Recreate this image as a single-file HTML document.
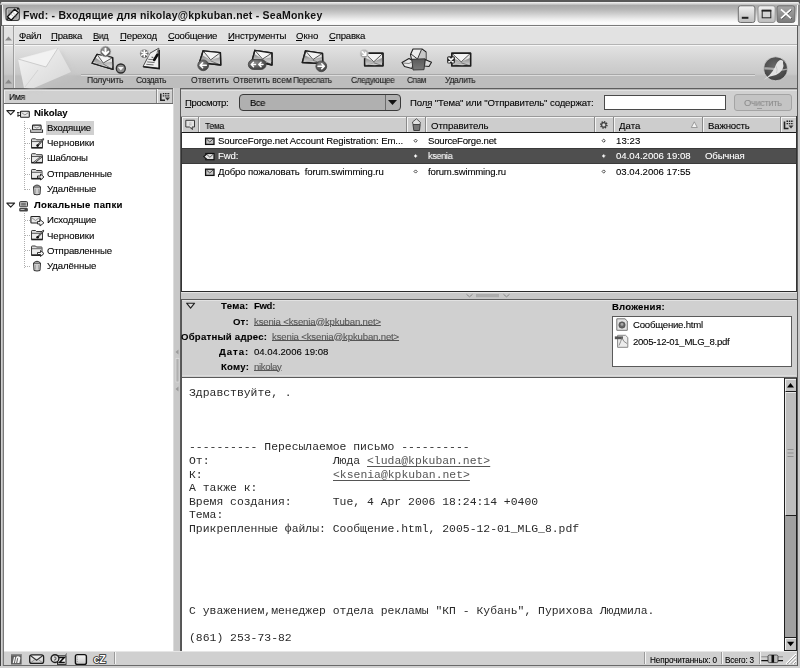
<!DOCTYPE html>
<html><head><meta charset="utf-8"><style>
*{margin:0;padding:0;box-sizing:border-box}
html,body{width:800px;height:668px;overflow:hidden}
body{position:relative;background:#d4d4d4;font-family:"Liberation Sans",sans-serif}
.a{position:absolute}
.t{position:absolute;white-space:pre;will-change:transform}
svg{position:absolute;overflow:visible}

</style></head><body>
<div class="a" style="left:0px;top:0px;width:800px;height:8px;background:#585858"></div>
<div class="a" style="left:0px;top:0px;width:800px;height:26px;background:linear-gradient(#585858 0,#585858 1.5px,#f4f4f4 2px,#e4e4e4 3px,#aaaaaa 5.5px,#b4b4b4 9px,#cfcfcf 14px,#ececec 19px,#fdfdfd 23px,#f4f4f4 25px,#7a7a7a 25px,#7a7a7a 26px);border-radius:6px 6px 0 0"></div>
<div class="a" style="left:0px;top:5px;width:2px;height:21px;background:#585858"></div>
<div class="a" style="left:2px;top:5px;width:1px;height:20px;background:#f4f4f4"></div>
<div class="a" style="left:797px;top:5px;width:1px;height:20px;background:#f8f8f8"></div>
<div class="a" style="left:798px;top:5px;width:2px;height:21px;background:#8a8a8a"></div>
<div class="a" style="left:0px;top:26px;width:800px;height:18px;background:#e2e2e2;border-top:1px solid #f6f6f6"></div>
<div class="a" style="left:0px;top:44px;width:800px;height:1px;background:#b4b4b4"></div>
<div class="a" style="left:0px;top:45px;width:800px;height:1px;background:#f6f6f6"></div>
<div class="a" style="left:0px;top:46px;width:800px;height:42px;background:linear-gradient(#e2e2e2 0,#d2d2d2 16px,#c8c8c8 28px,#c8c8c8 28px,#bdbdbd 30px,#bdbdbd 42px)"></div>
<div class="a" style="left:0px;top:88px;width:800px;height:1px;background:#5e5e5e"></div>
<div class="a" style="left:13px;top:26px;width:1px;height:62px;background:#9e9e9e"></div>
<div class="a" style="left:14px;top:26px;width:1px;height:62px;background:#e8e8e8"></div>
<svg style="left:5px;top:36px" width="8" height="5"><path d="M0,4.5 L3.5,0.5 L7,4.5Z" fill="#8a8a8a"/></svg>
<svg style="left:5px;top:79px" width="8" height="5"><path d="M0,4.5 L3.5,0.5 L7,4.5Z" fill="#8a8a8a"/></svg>
<div class="a" style="left:81px;top:74px;width:674px;height:1px;background:#a8a8a8"></div>
<div class="a" style="left:81px;top:75px;width:674px;height:1px;background:#dcdcdc"></div>
<div class="a" style="left:3px;top:88px;width:171px;height:564px;background:#fff;border-left:1px solid #6a6a6a"></div>
<div class="a" style="left:4px;top:88px;width:169px;height:16px;background:#d0d0d0;border-top:1px solid #5e5e5e;border-bottom:1px solid #6a6a6a"></div>
<div class="a" style="left:4px;top:89px;width:169px;height:1px;background:#b4b4b4"></div>
<div class="a" style="left:4px;top:90px;width:169px;height:1px;background:#e2e2e2"></div>
<div class="a" style="left:4px;top:90px;width:1px;height:13px;background:#eeeeee"></div>
<div class="a" style="left:156px;top:89px;width:1px;height:14px;background:#8a8a8a"></div>
<div class="a" style="left:157px;top:89px;width:1px;height:14px;background:#f4f4f4"></div>
<div class="a" style="left:172px;top:89px;width:1px;height:14px;background:#8a8a8a"></div>
<div class="a" style="left:173px;top:88px;width:7px;height:563px;background:#c8c8c8;border-left:1px solid #dcdcdc"></div>
<div class="a" style="left:180px;top:89px;width:1px;height:562px;background:#5a5a5a"></div>
<div class="a" style="left:181px;top:89px;width:616px;height:27px;background:#d0d0d0;border-top:1px solid #b4b4b4"></div>
<div class="a" style="left:181px;top:90px;width:616px;height:1px;background:#e2e2e2"></div>
<div class="a" style="left:239px;top:94px;width:162px;height:17px;background:#b0b0b0;border:1px solid #3a3a3a;border-radius:4px"></div>
<div class="a" style="left:385px;top:95px;width:1px;height:15px;background:#6a6a6a"></div>
<div class="a" style="left:604px;top:95px;width:122px;height:15px;background:#fff;border:1px solid #4a4a4a"></div>
<div class="a" style="left:734px;top:94px;width:58px;height:17px;background:#c4c4c4;border:1px solid #a4a4a4;border-radius:3px"></div>
<div class="a" style="left:181px;top:116px;width:616px;height:17px;background:#cdcdcd;border-bottom:1px solid #1a1a1a;border-left:1px solid #555"></div>
<div class="a" style="left:181px;top:116px;width:616px;height:1px;background:#9a9a9a"></div>
<div class="a" style="left:182px;top:117px;width:614px;height:1px;background:#f4f4f4"></div>
<div class="a" style="left:198px;top:117px;width:1px;height:15px;background:#8a8a8a"></div>
<div class="a" style="left:199px;top:117px;width:1px;height:15px;background:#f4f4f4"></div>
<div class="a" style="left:406px;top:117px;width:1px;height:15px;background:#8a8a8a"></div>
<div class="a" style="left:407px;top:117px;width:1px;height:15px;background:#f4f4f4"></div>
<div class="a" style="left:425px;top:117px;width:1px;height:15px;background:#8a8a8a"></div>
<div class="a" style="left:426px;top:117px;width:1px;height:15px;background:#f4f4f4"></div>
<div class="a" style="left:594px;top:117px;width:1px;height:15px;background:#8a8a8a"></div>
<div class="a" style="left:595px;top:117px;width:1px;height:15px;background:#f4f4f4"></div>
<div class="a" style="left:613px;top:117px;width:1px;height:15px;background:#8a8a8a"></div>
<div class="a" style="left:614px;top:117px;width:1px;height:15px;background:#f4f4f4"></div>
<div class="a" style="left:702px;top:117px;width:1px;height:15px;background:#8a8a8a"></div>
<div class="a" style="left:703px;top:117px;width:1px;height:15px;background:#f4f4f4"></div>
<div class="a" style="left:780px;top:117px;width:1px;height:15px;background:#8a8a8a"></div>
<div class="a" style="left:781px;top:117px;width:1px;height:15px;background:#f4f4f4"></div>
<div class="a" style="left:182px;top:117px;width:1px;height:15px;background:#f4f4f4"></div>
<div class="a" style="left:796px;top:116px;width:1px;height:17px;background:#333"></div>
<div class="a" style="left:181px;top:133px;width:616px;height:159px;background:#fff;border-left:1px solid #333;border-bottom:1px solid #2a2a2a;border-right:1px solid #333"></div>
<div class="a" style="left:182px;top:148px;width:614px;height:16px;background:#4f4f4f;border-top:1px solid #3a3a3a;border-bottom:1px solid #3a3a3a"></div>
<div class="a" style="left:181px;top:292px;width:616px;height:7px;background:#c8c8c8;border-top:1px solid #e4e4e4"></div>
<div class="a" style="left:181px;top:299px;width:616px;height:79px;background:#d0d0d0;border-top:1px solid #5e5e5e;border-bottom:1px solid #5a5a5a;border-left:1px solid #555"></div>
<div class="a" style="left:182px;top:300px;width:614px;height:1px;background:#e2e2e2"></div>
<div class="a" style="left:182px;top:375px;width:614px;height:1px;background:#dcdcdc"></div>
<div class="a" style="left:612px;top:316px;width:180px;height:51px;background:#fff;border:1px solid #5a5a5a"></div>
<div class="a" style="left:181px;top:378px;width:604px;height:273px;background:#fff;border-left:1px solid #555"></div>
<div class="a" style="left:784px;top:378px;width:13px;height:273px;background:#a0a0a0;border-left:1px solid #1e1e1e;border-right:1px solid #1e1e1e;border-bottom:1px solid #1e1e1e"></div>
<div class="a" style="left:785px;top:378px;width:11px;height:1px;background:#555"></div>
<div class="a" style="left:785px;top:379px;width:11px;height:13px;background:#c4c4c4;border-top:1px solid #f0f0f0;border-left:1px solid #f0f0f0;border-bottom:1px solid #1e1e1e"></div>
<div class="a" style="left:785px;top:392px;width:11px;height:124px;background:#bdbdbd;border-top:1px solid #e8e8e8;border-left:1px solid #e8e8e8;border-bottom:1px solid #1e1e1e"></div>
<div class="a" style="left:785px;top:637px;width:11px;height:14px;background:#c4c4c4;border-top:1px solid #1e1e1e;border-bottom:1px solid #1e1e1e"></div>
<div class="a" style="left:785px;top:638px;width:11px;height:1px;background:#f0f0f0"></div>
<div class="a" style="left:785px;top:638px;width:1px;height:12px;background:#f0f0f0"></div>
<div class="a" style="left:4px;top:651px;width:793px;height:14px;background:#d0d0d0;border-top:1px solid #e6e6e6"></div>
<div class="a" style="left:114px;top:652px;width:1px;height:12px;background:#9a9a9a"></div>
<div class="a" style="left:115px;top:652px;width:1px;height:12px;background:#f4f4f4"></div>
<div class="a" style="left:644px;top:652px;width:1px;height:12px;background:#9a9a9a"></div>
<div class="a" style="left:645px;top:652px;width:1px;height:12px;background:#f4f4f4"></div>
<div class="a" style="left:721px;top:652px;width:1px;height:12px;background:#9a9a9a"></div>
<div class="a" style="left:722px;top:652px;width:1px;height:12px;background:#f4f4f4"></div>
<div class="a" style="left:759px;top:652px;width:1px;height:12px;background:#9a9a9a"></div>
<div class="a" style="left:760px;top:652px;width:1px;height:12px;background:#f4f4f4"></div>
<div class="a" style="left:0px;top:26px;width:1px;height:642px;background:#404040"></div>
<div class="a" style="left:1px;top:26px;width:1px;height:642px;background:#d0d0d0"></div>
<div class="a" style="left:2px;top:26px;width:1px;height:642px;background:#b8b8b8"></div>
<div class="a" style="left:3px;top:26px;width:1px;height:640px;background:#7a7a7a"></div>
<div class="a" style="left:797px;top:26px;width:1px;height:642px;background:#5a5a5a"></div>
<div class="a" style="left:798px;top:26px;width:2px;height:642px;background:#c8c8c8"></div>
<div class="a" style="left:3px;top:665px;width:794px;height:1px;background:#6a6a6a"></div>
<div class="a" style="left:0px;top:666px;width:800px;height:2px;background:#d0d0d0"></div>
<svg style="left:0;top:0" width="800" height="668"><defs>
<linearGradient id="capb" x1="0" y1="0" x2="0" y2="1"><stop offset="0" stop-color="#f2f2f2"/><stop offset="1" stop-color="#bcbcbc"/></linearGradient>
<linearGradient id="capx" x1="0" y1="0" x2="0" y2="1"><stop offset="0" stop-color="#a8a8a8"/><stop offset="1" stop-color="#7a7a7a"/></linearGradient>
</defs><rect x="738.3" y="5.8" width="16.6" height="16.7" rx="2.2" fill="url(#capb)" stroke="#6e6e6e" stroke-width="1"/><rect x="741.8" y="16.8" width="6.6" height="2" fill="#222"/><rect x="758" y="5.8" width="17.2" height="16.7" rx="2.2" fill="url(#capb)" stroke="#8a8a8a" stroke-width="0.9"/><rect x="762.2" y="10.3" width="8.6" height="7.5" fill="#d4d4d4" stroke="#222" stroke-width="1"/><rect x="761.7" y="9.8" width="9.6" height="1.8" fill="#222"/><rect x="777" y="5.8" width="17.8" height="16.7" rx="2.2" fill="url(#capx)" stroke="#6a6a6a" stroke-width="0.9"/><path d="M781.5,10 L791.5,19 M791.5,10 L781.5,19" stroke="#3a3a3a" stroke-width="1.6"/><path d="M781,9.3 L791,18.3 M791,9.3 L781,18.3" stroke="#fff" stroke-width="1.8"/><rect x="6" y="7.8" width="13.3" height="12.6" rx="2.2" fill="#9a9a9a" stroke="#3a3a3a" stroke-width="1.1"/><rect x="7.3" y="9" width="10.8" height="10.2" rx="1.2" fill="none" stroke="#d8d8d8" stroke-width="0.7"/><polygon points="7.4,16.8 14.6,9.2 18.3,12.6 11.2,20.2" fill="#fafafa" stroke="#111" stroke-width="1.3" stroke-linejoin="round"/><path d="M10.5,13.8 L14.5,17.3 M12.3,12 L15.8,15.2" stroke="#aaa" stroke-width="0.7"/><path d="M7,19.5 L9,18 M17,9 L18.8,8.5" stroke="#111" stroke-width="1.4"/><defs>
<linearGradient id="envg" x1="0" y1="0" x2="0" y2="1"><stop offset="0" stop-color="#f6f6f6"/><stop offset="0.5" stop-color="#e0e0e0"/><stop offset="1" stop-color="#c4c4c4"/></linearGradient>
<radialGradient id="dcirc" cx="0.4" cy="0.35" r="0.7"><stop offset="0" stop-color="#8a8a8a"/><stop offset="1" stop-color="#3a3a3a"/></radialGradient>
<radialGradient id="mcirc" cx="0.4" cy="0.3" r="0.75"><stop offset="0" stop-color="#9a9a9a"/><stop offset="1" stop-color="#4e4e4e"/></radialGradient>
<radialGradient id="lcirc" cx="0.4" cy="0.35" r="0.7"><stop offset="0" stop-color="#d8d8d8"/><stop offset="1" stop-color="#8a8a8a"/></radialGradient>
<linearGradient id="envband" x1="0" y1="0" x2="0" y2="1"><stop offset="0" stop-color="#8a8a8a"/><stop offset="1" stop-color="#d8d8d8"/></linearGradient>
<linearGradient id="bucket" x1="0" y1="0" x2="0" y2="1"><stop offset="0" stop-color="#5a5a5a"/><stop offset="1" stop-color="#7a7a7a"/></linearGradient>
<filter id="blur2" x="-20%" y="-20%" width="140%" height="140%"><feGaussianBlur stdDeviation="2"/></filter>
<linearGradient id="bigenv" x1="0" y1="0" x2="1" y2="1"><stop offset="0" stop-color="#f4f4f4"/><stop offset="1" stop-color="#d6d6d6"/></linearGradient>
<radialGradient id="logo" cx="0.45" cy="0.4" r="0.65"><stop offset="0" stop-color="#6a6a6a"/><stop offset="1" stop-color="#3e3e3e"/></radialGradient>
</defs><polygon points="22.00,62.00 62.00,51.00 75.00,76.00 38.00,90.00 28.00,90.00" fill="#c4c4c4" opacity="0.5" filter="url(#blur2)"/><polygon points="18.00,59.00 58.00,48.00 71.00,72.00 34.00,88.00 24.00,88.00" fill="url(#bigenv)"/><polygon points="19.00,59.50 58.00,48.50 46.00,67.00" fill="#f2f2f2"/><polyline points="18.00,59.00 46.00,67.00 58.00,48.00" fill="none" stroke="#c8c8c8" stroke-width="0.9"/><polyline points="25.00,87.00 38.00,70.00" fill="none" stroke="#cfcfcf" stroke-width="0.8"/><polygon points="97.00,54.30 112.70,57.50 113.00,69.50 92.00,63.30" fill="url(#envg)" stroke="#1e1e1e" stroke-width="1.15" stroke-linejoin="round"/><polygon points="95.25,57.45 103.25,63.04 112.81,61.70 112.92,66.50 103.55,66.71 93.00,61.50" fill="url(#envband)"/><polygon points="97.94,54.49 103.25,63.04 111.76,57.31" fill="#f4f4f4"/><polyline points="97.00,54.30 103.25,63.04 112.70,57.50" fill="none" stroke="#4a4a4a" stroke-width="0.9" stroke-linejoin="round"/><polyline points="113.00,69.50 103.06,63.88" fill="none" stroke="#666" stroke-width="0.8"/><polyline points="92.00,63.30 103.06,63.88" fill="none" stroke="#9a9a9a" stroke-width="0.6"/><polygon points="97.00,54.30 112.70,57.50 113.00,69.50 92.00,63.30" fill="none" stroke="#1e1e1e" stroke-width="1.15" stroke-linejoin="round"/><circle cx="105.5" cy="51.5" r="5.4" fill="url(#mcirc)" stroke="#c4c4c4" stroke-width="0.7"/><path d="M105.5,48.6 V54 M102.6,51.6 L105.5,54.5 L108.4,51.6" fill="none" stroke="#fff" stroke-width="1.9" stroke-linecap="round" stroke-linejoin="round"/><circle cx="120.8" cy="68.5" r="4.5" fill="#8e8e8e" stroke="#2a2a2a" stroke-width="1.3"/><path d="M117.9,67 L123.7,67 L120.8,70.6Z" fill="#f4f4f4"/><polygon points="150.00,53.20 158.80,48.20 159.20,68.60 143.00,66.60" fill="#efefef" stroke="#3a3a3a" stroke-width="0.9" stroke-linejoin="round"/><path d="M143.3,66.8 L159.2,68.6 L159.2,50" fill="none" stroke="#1a1a1a" stroke-width="1.5"/><path d="M148.3,59.3 L155,59.8 M147.2,61.9 L154.5,62.5 M146.3,64.3 L153.5,64.9" stroke="#6a6a6a" stroke-width="1"/><path d="M151.5,57.2 L153.3,57.4" stroke="#444" stroke-width="1"/><path d="M154.2,60 L157.5,54.5" stroke="#0e0e0e" stroke-width="2.6" stroke-linecap="round"/><path d="M158.3,48.8 L157,53" stroke="#777" stroke-width="1"/><circle cx="144.3" cy="53.6" r="4.7" fill="url(#mcirc)" stroke="#e8e8e8" stroke-width="0.8"/><path d="M144.3,50.4 V56.8 M141.5,52 L147.1,55.2 M141.5,55.2 L147.1,52" stroke="#fff" stroke-width="1.4" stroke-linecap="round"/><polygon points="203.10,50.80 220.40,52.60 220.80,65.00 199.50,62.50" fill="url(#envg)" stroke="#1e1e1e" stroke-width="1.35" stroke-linejoin="round"/><polygon points="201.84,54.89 210.66,59.89 220.54,56.94 220.70,61.90 211.22,63.88 200.22,60.16" fill="url(#envband)"/><polygon points="204.14,50.91 210.66,59.89 219.36,52.49" fill="#f4f4f4"/><polyline points="203.10,50.80 210.66,59.89 220.40,52.60" fill="none" stroke="#4a4a4a" stroke-width="0.9" stroke-linejoin="round"/><polyline points="220.80,65.00 210.53,60.86" fill="none" stroke="#666" stroke-width="0.8"/><polyline points="199.50,62.50 210.53,60.86" fill="none" stroke="#9a9a9a" stroke-width="0.6"/><polygon points="203.10,50.80 220.40,52.60 220.80,65.00 199.50,62.50" fill="none" stroke="#1e1e1e" stroke-width="1.35" stroke-linejoin="round"/><circle cx="203.2" cy="65.3" r="5.4" fill="url(#dcirc)" stroke="#444" stroke-width="0.8"/><path d="M206.3,65.3 H200.3 M202.6,62.8 L200.1,65.3 L202.6,67.8" fill="none" stroke="#fff" stroke-width="1.6" stroke-linecap="round" stroke-linejoin="round"/><polygon points="254.80,50.30 272.00,53.00 272.00,65.00 252.30,60.00" fill="url(#envg)" stroke="#1e1e1e" stroke-width="1.35" stroke-linejoin="round"/><polygon points="253.93,53.70 262.55,59.03 272.00,57.20 272.00,62.00 263.13,62.75 252.80,58.06" fill="url(#envband)"/><polygon points="255.83,50.46 262.55,59.03 270.97,52.84" fill="#f4f4f4"/><polyline points="254.80,50.30 262.55,59.03 272.00,53.00" fill="none" stroke="#4a4a4a" stroke-width="0.9" stroke-linejoin="round"/><polyline points="272.00,65.00 262.45,59.90" fill="none" stroke="#666" stroke-width="0.8"/><polyline points="252.30,60.00 262.45,59.90" fill="none" stroke="#9a9a9a" stroke-width="0.6"/><polygon points="254.80,50.30 272.00,53.00 272.00,65.00 252.30,60.00" fill="none" stroke="#1e1e1e" stroke-width="1.35" stroke-linejoin="round"/><rect x="248.3" y="59.5" width="17.8" height="10" rx="5" fill="url(#dcirc)" stroke="#444" stroke-width="0.8"/><path d="M255.5,64.5 H251.5 M253.5,62.3 L251.3,64.5 L253.5,66.7 M263,64.5 H259 M261,62.3 L258.8,64.5 L261,66.7" fill="none" stroke="#fff" stroke-width="1.5" stroke-linecap="round" stroke-linejoin="round"/><polygon points="305.50,50.80 322.50,53.30 322.80,63.50 302.30,62.50" fill="url(#envg)" stroke="#1e1e1e" stroke-width="1.35" stroke-linejoin="round"/><polygon points="304.38,54.89 313.01,59.50 322.61,56.87 322.73,60.95 313.57,63.05 302.94,60.16" fill="url(#envband)"/><polygon points="306.52,50.95 313.01,59.50 321.48,53.15" fill="#f4f4f4"/><polyline points="305.50,50.80 313.01,59.50 322.50,53.30" fill="none" stroke="#4a4a4a" stroke-width="0.9" stroke-linejoin="round"/><polyline points="322.80,63.50 312.90,60.37" fill="none" stroke="#666" stroke-width="0.8"/><polyline points="302.30,62.50 312.90,60.37" fill="none" stroke="#9a9a9a" stroke-width="0.6"/><polygon points="305.50,50.80 322.50,53.30 322.80,63.50 302.30,62.50" fill="none" stroke="#1e1e1e" stroke-width="1.35" stroke-linejoin="round"/><circle cx="321.3" cy="66.3" r="5.4" fill="url(#dcirc)" stroke="#444" stroke-width="0.8"/><path d="M318,66.3 H324.2 M321.8,63.8 L324.3,66.3 L321.8,68.8" fill="none" stroke="#fff" stroke-width="1.6" stroke-linecap="round" stroke-linejoin="round"/><polygon points="364.60,53.20 383.00,53.20 383.00,65.80 364.60,65.80" fill="url(#envg)" stroke="#1e1e1e" stroke-width="1.35" stroke-linejoin="round"/><polygon points="364.60,57.61 373.80,61.77 383.00,57.61 383.00,62.65 374.72,65.80 364.60,63.28" fill="url(#envband)"/><polygon points="365.70,53.20 373.80,61.77 381.90,53.20" fill="#f4f4f4"/><polyline points="364.60,53.20 373.80,61.77 383.00,53.20" fill="none" stroke="#4a4a4a" stroke-width="0.9" stroke-linejoin="round"/><polyline points="383.00,65.80 373.80,62.78" fill="none" stroke="#666" stroke-width="0.8"/><polyline points="364.60,65.80 373.80,62.78" fill="none" stroke="#9a9a9a" stroke-width="0.6"/><polygon points="364.60,53.20 383.00,53.20 383.00,65.80 364.60,65.80" fill="none" stroke="#1e1e1e" stroke-width="1.35" stroke-linejoin="round"/><circle cx="364.1" cy="53.7" r="4.1" fill="url(#lcirc)" stroke="#d0d0d0" stroke-width="0.7"/><path d="M362.2,51.8 L365.5,55.1 M365.8,52.3 V55.4 H362.8" fill="none" stroke="#fff" stroke-width="1.4" stroke-linecap="round"/><polygon points="402.00,62.50 409.00,58.50 413.50,61.00 412.00,68.50 404.50,66.50" fill="#e8e8e8" stroke="#222" stroke-width="1.1" stroke-linejoin="round"/><polyline points="403.00,63.00 409.00,63.50 412.50,61.50" fill="none" stroke="#555" stroke-width="0.7"/><polygon points="425.00,59.50 431.50,62.30 429.00,66.50 424.50,66.00" fill="#dadada" stroke="#222" stroke-width="1.1" stroke-linejoin="round"/><polygon points="410.50,54.50 413.00,49.00 422.00,49.00 426.00,52.00 426.00,59.50 411.50,59.50" fill="#ececec" stroke="#1e1e1e" stroke-width="1.1" stroke-linejoin="round"/><polygon points="417.50,59.00 421.50,49.50 425.50,52.50 425.50,59.00" fill="#c8c8c8"/><polyline points="411.00,54.00 417.50,59.00 421.50,49.50" fill="none" stroke="#222" stroke-width="0.9"/><polygon points="411.80,59.20 425.10,58.80 424.00,69.70 413.00,70.00" fill="url(#bucket)" stroke="#333" stroke-width="0.9"/><polygon points="451.80,53.20 470.60,53.20 470.60,65.90 451.80,65.90" fill="url(#envg)" stroke="#1e1e1e" stroke-width="1.35" stroke-linejoin="round"/><polygon points="451.80,57.65 461.20,61.84 470.60,57.65 470.60,62.73 462.14,65.90 451.80,63.36" fill="url(#envband)"/><polygon points="452.93,53.20 461.20,61.84 469.47,53.20" fill="#f4f4f4"/><polyline points="451.80,53.20 461.20,61.84 470.60,53.20" fill="none" stroke="#4a4a4a" stroke-width="0.9" stroke-linejoin="round"/><polyline points="470.60,65.90 461.20,62.85" fill="none" stroke="#666" stroke-width="0.8"/><polyline points="451.80,65.90 461.20,62.85" fill="none" stroke="#9a9a9a" stroke-width="0.6"/><polygon points="451.80,53.20 470.60,53.20 470.60,65.90 451.80,65.90" fill="none" stroke="#1e1e1e" stroke-width="1.35" stroke-linejoin="round"/><rect x="447.1" y="56.2" width="7.8" height="7.4" rx="1.6" fill="#2a2a2a"/><path d="M449,58.1 L453,61.9 M453,58.1 L449,61.9" stroke="#fff" stroke-width="1.7" stroke-linecap="round"/><circle cx="775.6" cy="68.8" r="12" fill="url(#logo)" stroke="#e0e0e0" stroke-width="0.7"/><path d="M764.2,67.3 Q772,66.8 779,69 Q784,69.5 787.3,68.3 L787.4,69.8 Q783,71 778,70.8 Q771,69.5 764.2,69.5Z" fill="#a8a8a8"/><path d="M763.5,80 L769.5,75 Q773,71.5 775,67 Q777,61.5 779.5,60.2 Q782,59.6 783.2,61.3 Q782.6,63 783.5,66 Q782.5,72 776,75 L770,76.6 Z" fill="#e2e2e2"/><path d="M776,66 Q778,70 776.5,73" fill="none" stroke="#c4c4c4" stroke-width="0.8"/><line x1="24.5" y1="121" x2="24.5" y2="190" stroke="#b0b0b0" stroke-width="1" stroke-dasharray="1,1"/><line x1="25" y1="128.5" x2="31" y2="128.5" stroke="#b0b0b0" stroke-width="1" stroke-dasharray="1,1"/><line x1="25" y1="143.5" x2="31" y2="143.5" stroke="#b0b0b0" stroke-width="1" stroke-dasharray="1,1"/><line x1="25" y1="158.5" x2="31" y2="158.5" stroke="#b0b0b0" stroke-width="1" stroke-dasharray="1,1"/><line x1="25" y1="174.5" x2="31" y2="174.5" stroke="#b0b0b0" stroke-width="1" stroke-dasharray="1,1"/><line x1="25" y1="189.5" x2="31" y2="189.5" stroke="#b0b0b0" stroke-width="1" stroke-dasharray="1,1"/><line x1="24.5" y1="213" x2="24.5" y2="268" stroke="#b0b0b0" stroke-width="1" stroke-dasharray="1,1"/><line x1="25" y1="220.5" x2="31" y2="220.5" stroke="#b0b0b0" stroke-width="1" stroke-dasharray="1,1"/><line x1="25" y1="235.5" x2="31" y2="235.5" stroke="#b0b0b0" stroke-width="1" stroke-dasharray="1,1"/><line x1="25" y1="250.5" x2="31" y2="250.5" stroke="#b0b0b0" stroke-width="1" stroke-dasharray="1,1"/><line x1="25" y1="266.5" x2="31" y2="266.5" stroke="#b0b0b0" stroke-width="1" stroke-dasharray="1,1"/><polygon points="6.8,110.6 14.600000000000001,110.6 10.7,114.6" fill="#f4f4f4" stroke="#222" stroke-width="1.1" stroke-linejoin="round"/><polygon points="6.8,203.1 14.600000000000001,203.1 10.7,207.1" fill="#f4f4f4" stroke="#222" stroke-width="1.1" stroke-linejoin="round"/><rect x="20.5" y="111.3" width="8.8" height="5.9" rx="0.8" fill="#e8e8e8" stroke="#222" stroke-width="1.1"/><polyline points="21.5,112.6 24.9,114.94 28.3,112.6" fill="none" stroke="#777" stroke-width="0.8"/><path d="M17,112.5 H19.5 M17.5,115.5 H20 M18,112 V117" stroke="#333" stroke-width="1"/><rect x="32.5" y="125.1" width="8.6" height="4.8" rx="0.8" fill="#e8e8e8" stroke="#222" stroke-width="1.1"/><polyline points="33.5,126.39999999999999 36.8,128.07999999999998 40.1,126.39999999999999" fill="none" stroke="#777" stroke-width="0.8"/><path d="M30.8,129.5 V132.2 H42.5 V129.5" fill="none" stroke="#222" stroke-width="1.1"/><rect x="31.3" y="130" width="10.8" height="1.8" fill="#bbb"/><path d="M31.5,147.60000000000002 V139.5 Q31.5,138.8 32.2,138.8 H35.5 L36.5,139.8 H42 Q42.5,139.8 42.5,140.5 V147.60000000000002Z" fill="#dedede" stroke="#3a3a3a" stroke-width="1"/><path d="M32,141.60000000000002 H42" stroke="#5a5a5a" stroke-width="1"/><rect x="32.2" y="142.3" width="9.6" height="4.800000000000001" fill="#ececec"/><path d="M31.3,147.8 H42.7" stroke="#222" stroke-width="1.6"/><path d="M43.3,139.10000000000002 L37.8,145.3" stroke="#333" stroke-width="1.8" stroke-linecap="round"/><path d="M43,139.3 L38.2,144.8" stroke="#bbb" stroke-width="0.6"/><circle cx="37.6" cy="145.60000000000002" r="1.3" fill="#111"/><path d="M31.5,239.3 V231.2 Q31.5,230.5 32.2,230.5 H35.5 L36.5,231.5 H42 Q42.5,231.5 42.5,232.2 V239.3Z" fill="#dedede" stroke="#3a3a3a" stroke-width="1"/><path d="M32,233.3 H42" stroke="#5a5a5a" stroke-width="1"/><rect x="32.2" y="234" width="9.6" height="4.800000000000001" fill="#ececec"/><path d="M31.3,239.5 H42.7" stroke="#222" stroke-width="1.6"/><path d="M43.3,230.8 L37.8,237" stroke="#333" stroke-width="1.8" stroke-linecap="round"/><path d="M43,231 L38.2,236.5" stroke="#bbb" stroke-width="0.6"/><circle cx="37.6" cy="237.3" r="1.3" fill="#111"/><path d="M31.5,162.5 V154.39999999999998 Q31.5,153.7 32.2,153.7 H35.5 L36.5,154.7 H42 Q42.5,154.7 42.5,155.39999999999998 V162.5Z" fill="#dedede" stroke="#3a3a3a" stroke-width="1"/><path d="M32,156.5 H42" stroke="#5a5a5a" stroke-width="1"/><rect x="32.2" y="157.2" width="9.6" height="4.800000000000001" fill="#ececec"/><path d="M31.3,162.7 H42.7" stroke="#222" stroke-width="1.6"/><path d="M34,162.7 L42,156.2" stroke="#333" stroke-width="2"/><path d="M34.5,162.2 L41.5,156.5" stroke="#f4f4f4" stroke-width="0.7"/><path d="M31.5,178.5 V170.2 Q31.5,169.5 32.2,169.5 H35.5 L36.5,170.5 H41.5 Q42.0,170.5 42.0,171.2 V178.5Z" fill="#dedede" stroke="#3a3a3a" stroke-width="1"/><path d="M32,172.3 H41.5" stroke="#5a5a5a" stroke-width="1"/><rect x="32.2" y="173" width="9.1" height="5.0" fill="#ececec"/><path d="M31.3,178.7 H42.2" stroke="#222" stroke-width="1.6"/><path d="M37.5,176 H40.5 V174 L44,177 L40.5,180 V178 H37.5Z" fill="#f0f0f0" stroke="#222" stroke-width="0.9"/><path d="M31.5,255.0 V246.7 Q31.5,246.0 32.2,246.0 H35.5 L36.5,247.0 H41.5 Q42.0,247.0 42.0,247.7 V255.0Z" fill="#dedede" stroke="#3a3a3a" stroke-width="1"/><path d="M32,248.8 H41.5" stroke="#5a5a5a" stroke-width="1"/><rect x="32.2" y="249.5" width="9.1" height="5.0" fill="#ececec"/><path d="M31.3,255.2 H42.2" stroke="#222" stroke-width="1.6"/><path d="M37.5,252.5 H40.5 V250.5 L44,253.5 L40.5,256.5 V254.5 H37.5Z" fill="#f0f0f0" stroke="#222" stroke-width="0.9"/><path d="M33.5,186.8 Q37,183.3 40.5,186.8 L40,194.3 Q37,195.3 34,194.3Z" fill="#cfcfcf" stroke="#333" stroke-width="1"/><path d="M33.5,187.0 H40.5" stroke="#333" stroke-width="0.9"/><path d="M35.5,188.8 V193.3 M38.5,188.8 V193.3" stroke="#999" stroke-width="0.7"/><path d="M33.5,263 Q37,259.5 40.5,263 L40,270.5 Q37,271.5 34,270.5Z" fill="#cfcfcf" stroke="#333" stroke-width="1"/><path d="M33.5,263.2 H40.5" stroke="#333" stroke-width="0.9"/><path d="M35.5,265 V269.5 M38.5,265 V269.5" stroke="#999" stroke-width="0.7"/><rect x="19.6" y="201.6" width="7.9" height="5.2" rx="1" fill="#bdbdbd" stroke="#333" stroke-width="1"/><rect x="21.2" y="203" width="4.6" height="2.6" fill="#777"/><rect x="19.2" y="208" width="8.7" height="3.6" rx="1" fill="#444"/><rect x="20.5" y="209" width="4" height="1" fill="#bbb"/><rect x="30.9" y="216.5" width="9.2" height="6.5" rx="0.8" fill="#e8e8e8" stroke="#222" stroke-width="1.1"/><polyline points="31.9,217.8 35.5,220.5 39.099999999999994,217.8" fill="none" stroke="#777" stroke-width="0.8"/><path d="M37.5,221.5 H40 V219.5 L44,222.8 L40,226 V224 H37.5Z" fill="#f0f0f0" stroke="#222" stroke-width="0.9"/><path d="M185.8,120.3 H194.5 V127 H192 L192.5,129.5 L189.5,127 H185.8Z" fill="#e4e4e4" stroke="#3a3a3a" stroke-width="1" stroke-linejoin="round"/><path d="M189,123 H191.5 M189,124.8 H191.5" stroke="#aaa" stroke-width="0.8"/><path d="M413,124.5 H420.2 L419.5,130.5 H413.8Z" fill="#777" stroke="#333" stroke-width="0.9"/><path d="M412.5,122 L416.5,118.8 L420.5,122.5 L419.8,124.5 H413Z" fill="#e0e0e0" stroke="#333" stroke-width="0.8"/><circle cx="603.8" cy="124.9" r="3.1" fill="none" stroke="#3a3a3a" stroke-width="1.5" stroke-dasharray="1.3,1.1"/><circle cx="603.8" cy="124.9" r="2.2" fill="none" stroke="#444" stroke-width="1.2"/><circle cx="603.8" cy="124.9" r="1" fill="#e0e0e0"/><path d="M691.3,127.5 L694.3,121.8 L697.3,127.5Z" fill="#f4f4f4" stroke="#8a8a8a" stroke-width="0.8"/><path d="M784.5,121.5 V128.5 H788.5" fill="none" stroke="#222" stroke-width="1.6"/><path d="M786.5,121.3 H793.5" stroke="#222" stroke-width="1.4" stroke-dasharray="1.5,0.8"/><path d="M786.5,123.6 H793.5" stroke="#222" stroke-width="1.2" stroke-dasharray="1.5,0.8"/><path d="M788.5,125.5 L791,128.6 L793.5,125.5Z" fill="#333"/><rect x="205.6" y="138.2" width="8.4" height="6.2" fill="#c8c8c8" stroke="#111" stroke-width="1.3"/><polyline points="206.6,139.1 209.8,142.0 213,139.1" fill="none" stroke="#444" stroke-width="0.9"/><rect x="205.6" y="169.2" width="8.4" height="6.2" fill="#c8c8c8" stroke="#111" stroke-width="1.3"/><polyline points="206.6,170.1 209.8,173.0 213,170.1" fill="none" stroke="#444" stroke-width="0.9"/><rect x="205.8" y="153.5" width="8.2" height="6.2" fill="#e0e0e0" stroke="#111" stroke-width="1.2"/><path d="M207,153.8 L203.8,156.6 L207,159.4" fill="#e0e0e0" stroke="#111" stroke-width="1.1"/><polyline points="206.8,154.4 209.9,157.3 213,154.4" fill="none" stroke="#444" stroke-width="0.9"/><path d="M415.6,139.1 L417.20000000000005,140.7 L415.6,142.29999999999998 L414.0,140.7Z" fill="#fff" stroke="#333" stroke-width="0.9"/><path d="M415.6,154.4 L417.20000000000005,156 L415.6,157.6 L414.0,156Z" fill="#fff" stroke="#bbb" stroke-width="0.9"/><path d="M415.6,169.9 L417.20000000000005,171.5 L415.6,173.1 L414.0,171.5Z" fill="#fff" stroke="#333" stroke-width="0.9"/><path d="M603.7,139.1 L605.3000000000001,140.7 L603.7,142.29999999999998 L602.1,140.7Z" fill="#fff" stroke="#333" stroke-width="0.9"/><path d="M603.7,154.4 L605.3000000000001,156 L603.7,157.6 L602.1,156Z" fill="#fff" stroke="#bbb" stroke-width="0.9"/><path d="M603.7,169.9 L605.3000000000001,171.5 L603.7,173.1 L602.1,171.5Z" fill="#fff" stroke="#333" stroke-width="0.9"/><path d="M388,100 L397,100 L392.5,105Z" fill="#111"/><path d="M160.8,93.5 V100.3 H165" fill="none" stroke="#222" stroke-width="1.5"/><path d="M162.8,93.6 H170" stroke="#222" stroke-width="1.4" stroke-dasharray="1.5,0.8"/><path d="M162.8,95.8 H170" stroke="#222" stroke-width="1.2" stroke-dasharray="1.5,0.8"/><path d="M165,97.5 L167.5,100.6 L170,97.5Z" fill="#333"/><polygon points="186.6,303.2 194.6,303.2 190.6,308.2" fill="#dcdcdc" stroke="#222" stroke-width="1.1" stroke-linejoin="round"/><path d="M616.8,318.8 H625 L627.3,321 V330.3 H616.8Z" fill="#e4e4e4" stroke="#777" stroke-width="1"/><circle cx="622" cy="325" r="3.2" fill="#666" stroke="#444" stroke-width="0.6"/><circle cx="622" cy="324.4" r="1.4" fill="#aaa"/><path d="M617.6,335.3 H625.5 L627.8,337.5 V347.3 H617.6Z" fill="#ececec" stroke="#888" stroke-width="1"/><rect x="614.8" y="336.4" width="8.2" height="2.8" fill="#555"/><path d="M619,345.5 Q621,341 622,337.5 Q623,342 627,343.5" fill="none" stroke="#777" stroke-width="0.8"/><path d="M178.5,349.5 L175.5,352 L178.5,354.5Z" fill="#9a9a9a"/><path d="M178.5,386.5 L175.5,389 L178.5,391.5Z" fill="#9a9a9a"/><rect x="176" y="358.5" width="3" height="23.5" fill="#b0b0b0" stroke="#e4e4e4" stroke-width="0.6"/><path d="M466.5,294.3 L469.5,296.8 L472.5,294.3" fill="none" stroke="#8a8a8a" stroke-width="1"/><path d="M503.5,294.3 L506.5,296.8 L509.5,294.3" fill="none" stroke="#8a8a8a" stroke-width="1"/><rect x="476" y="294" width="23" height="3.2" fill="#acacac"/><path d="M787,387.5 L790.5,383 L794,387.5Z" fill="#000"/><path d="M787,641.8 L790.6,646.3 L794.2,641.8Z" fill="#000"/><path d="M787.5,449.5 H793.5 M787.5,453 H793.5 M787.5,456.5 H793.5" stroke="#8a8a8a" stroke-width="0.9"/><rect x="11" y="654.2" width="10.6" height="10.3" fill="#5e5e5e"/><rect x="11" y="654.2" width="10.6" height="1.2" fill="#8a8a8a"/><path d="M13.3,663 L14.6,657 M15.5,663 L16.6,658 Q17,656.8 18,657 Q19,657.3 18.7,658.5 L17.8,663 M17.1,658 Q17.6,656.8 18.8,657 Q20,657.3 19.7,658.5 L18.8,663" fill="none" stroke="#f4f4f4" stroke-width="1.2"/><rect x="29.7" y="654.8" width="13.9" height="8.6" rx="2.2" fill="url(#envg)" stroke="#1e1e1e" stroke-width="1.3"/><polyline points="31,656 36.6,660.3 42.3,656" fill="none" stroke="#333" stroke-width="1.1"/><path d="M31,662.5 L35,659.5 M42.3,662.5 L38.3,659.5" stroke="#777" stroke-width="0.7"/><rect x="57.5" y="655.8" width="8.5" height="8.6" fill="#f0f0f0" stroke="#2a2a2a" stroke-width="1"/><path d="M59,657.5 H64.3 L59.3,662.6 H64.8" fill="none" stroke="#111" stroke-width="1.5"/><circle cx="55" cy="658.6" r="3.9" fill="#d8d8d8" stroke="#1e1e1e" stroke-width="1.4"/><path d="M54,657 Q56.5,656.5 56,659 Q55.5,660.5 54,660" fill="none" stroke="#444" stroke-width="0.9"/><path d="M65.5,654.5 L67,653.8" stroke="#555" stroke-width="1"/><rect x="75.4" y="654.6" width="11" height="9.8" rx="2" fill="url(#envg)" stroke="#111" stroke-width="1.4"/><path d="M77.2,656.5 V662.5" stroke="#777" stroke-width="0.9" stroke-dasharray="1,1.2"/><text x="93.6" y="663.4" font-family="Liberation Sans" font-weight="bold" font-size="10.8" fill="#fff" stroke="#1e1e1e" stroke-width="1.6" paint-order="stroke" letter-spacing="-0.3">cZ</text><path d="M761.3,656.8 H768 M778,656.8 H783" stroke="#8a8a8a" stroke-width="1"/><path d="M761.3,660.6 H768 M778,660.6 H783" stroke="#111" stroke-width="1.2"/><rect x="768" y="655" width="10" height="7.6" rx="1.5" fill="#bdbdbd" stroke="#333" stroke-width="0.8"/><rect x="771.5" y="655" width="2.6" height="7.6" fill="#111"/><path d="M786,664 L796,654 M789.5,664 L796,657.5 M793,664 L796,661" stroke="#fff" stroke-width="1.2"/><path d="M787,664 L796,655 M790.5,664 L796,658.5 M794,664 L796,662" stroke="#8a8a8a" stroke-width="0.8"/></svg>
<div class="t" style="left:23.25px;top:10.00px;font:bold 10.5px/1 'Liberation Sans';color:#111;letter-spacing:0.230px">Fwd: - Входящие для nikolay@kpkuban.net - SeaMonkey</div>
<div class="t" style="left:19.00px;top:31.00px;font:normal 9.6px/1 'Liberation Sans';color:#000;letter-spacing:-0.329px;-webkit-text-stroke:0.1px #000">Файл</div>
<div class="a" style="left:19px;top:40px;width:6px;height:1px;background:#000"></div>
<div class="t" style="left:51.00px;top:31.00px;font:normal 9.6px/1 'Liberation Sans';color:#000;letter-spacing:-0.214px;-webkit-text-stroke:0.1px #000">Правка</div>
<div class="a" style="left:51px;top:40px;width:6px;height:1px;background:#000"></div>
<div class="t" style="left:93.00px;top:31.00px;font:normal 9.6px/1 'Liberation Sans';color:#000;letter-spacing:-0.350px;transform:scaleX(0.9380);transform-origin:0.00px 0;-webkit-text-stroke:0.1px #000">Вид</div>
<div class="a" style="left:93px;top:40px;width:6px;height:1px;background:#000"></div>
<div class="t" style="left:119.50px;top:31.00px;font:normal 9.6px/1 'Liberation Sans';color:#000;letter-spacing:-0.168px;-webkit-text-stroke:0.1px #000">Переход</div>
<div class="a" style="left:120px;top:40px;width:6px;height:1px;background:#000"></div>
<div class="t" style="left:168.00px;top:31.00px;font:normal 9.6px/1 'Liberation Sans';color:#000;letter-spacing:-0.350px;-webkit-text-stroke:0.1px #000">Сообщение</div>
<div class="a" style="left:168px;top:40px;width:6px;height:1px;background:#000"></div>
<div class="t" style="left:227.50px;top:31.00px;font:normal 9.6px/1 'Liberation Sans';color:#000;letter-spacing:-0.142px;-webkit-text-stroke:0.1px #000">Инструменты</div>
<div class="a" style="left:228px;top:40px;width:6px;height:1px;background:#000"></div>
<div class="t" style="left:296.00px;top:31.00px;font:normal 9.6px/1 'Liberation Sans';color:#000;letter-spacing:0.014px;-webkit-text-stroke:0.1px #000">Окно</div>
<div class="a" style="left:296px;top:40px;width:6px;height:1px;background:#000"></div>
<div class="t" style="left:328.70px;top:31.00px;font:normal 9.6px/1 'Liberation Sans';color:#000;letter-spacing:-0.217px;-webkit-text-stroke:0.1px #000">Справка</div>
<div class="a" style="left:329px;top:40px;width:6px;height:1px;background:#000"></div>
<div class="t" style="left:86.80px;top:76.00px;font:normal 8.6px/1 'Liberation Sans';color:#1e1e1e;letter-spacing:-0.199px;-webkit-text-stroke:0.1px #1e1e1e">Получить</div>
<div class="t" style="left:136.00px;top:76.00px;font:normal 8.6px/1 'Liberation Sans';color:#1e1e1e;letter-spacing:-0.350px;-webkit-text-stroke:0.1px #1e1e1e">Создать</div>
<div class="t" style="left:191.00px;top:76.00px;font:normal 8.6px/1 'Liberation Sans';color:#1e1e1e;letter-spacing:0.192px;-webkit-text-stroke:0.1px #1e1e1e">Ответить</div>
<div class="t" style="left:233.00px;top:76.00px;font:normal 8.6px/1 'Liberation Sans';color:#1e1e1e;letter-spacing:0.028px;-webkit-text-stroke:0.1px #1e1e1e">Ответить всем</div>
<div class="t" style="left:293.40px;top:76.00px;font:normal 8.6px/1 'Liberation Sans';color:#1e1e1e;letter-spacing:-0.350px;transform:scaleX(0.9765);transform-origin:0.00px 0;-webkit-text-stroke:0.1px #1e1e1e">Переслать</div>
<div class="t" style="left:351.00px;top:76.00px;font:normal 8.6px/1 'Liberation Sans';color:#1e1e1e;letter-spacing:-0.350px;transform:scaleX(0.9666);transform-origin:0.00px 0;-webkit-text-stroke:0.1px #1e1e1e">Следующее</div>
<div class="t" style="left:407.40px;top:76.00px;font:normal 8.6px/1 'Liberation Sans';color:#1e1e1e;letter-spacing:-0.350px;transform:scaleX(0.9520);transform-origin:0.00px 0;-webkit-text-stroke:0.1px #1e1e1e">Спам</div>
<div class="t" style="left:445.00px;top:76.00px;font:normal 8.6px/1 'Liberation Sans';color:#1e1e1e;letter-spacing:-0.350px;transform:scaleX(0.9926);transform-origin:0.00px 0;-webkit-text-stroke:0.1px #1e1e1e">Удалить</div>
<div class="t" style="left:8.60px;top:92.00px;font:normal 9.6px/1 'Liberation Sans';color:#000;letter-spacing:-0.350px;transform:scaleX(0.9049);transform-origin:0.00px 0;-webkit-text-stroke:0.1px #000">Имя</div>
<div class="t" style="left:33.70px;top:108.00px;font:bold 9.6px/1 'Liberation Sans';color:#000;letter-spacing:-0.082px;-webkit-text-stroke:0.1px #000">Nikolay</div>
<div class="a" style="left:46px;top:121px;width:48px;height:14px;background:#d0d0d0"></div>
<div class="t" style="left:47.20px;top:123.00px;font:normal 9.6px/1 'Liberation Sans';color:#000;letter-spacing:-0.193px;-webkit-text-stroke:0.1px #000">Входящие</div>
<div class="t" style="left:47.20px;top:138.00px;font:normal 9.6px/1 'Liberation Sans';color:#000;letter-spacing:-0.044px;-webkit-text-stroke:0.1px #000">Черновики</div>
<div class="t" style="left:47.20px;top:153.00px;font:normal 9.6px/1 'Liberation Sans';color:#000;letter-spacing:-0.255px;-webkit-text-stroke:0.1px #000">Шаблоны</div>
<div class="t" style="left:47.20px;top:169.00px;font:normal 9.6px/1 'Liberation Sans';color:#000;letter-spacing:-0.120px;-webkit-text-stroke:0.1px #000">Отправленные</div>
<div class="t" style="left:47.20px;top:184.00px;font:normal 9.6px/1 'Liberation Sans';color:#000;letter-spacing:-0.088px;-webkit-text-stroke:0.1px #000">Удалённые</div>
<div class="t" style="left:33.80px;top:200.00px;font:bold 9.6px/1 'Liberation Sans';color:#000;letter-spacing:0.290px;-webkit-text-stroke:0.1px #000">Локальные папки</div>
<div class="t" style="left:47.20px;top:215.00px;font:normal 9.6px/1 'Liberation Sans';color:#000;letter-spacing:-0.194px;-webkit-text-stroke:0.1px #000">Исходящие</div>
<div class="t" style="left:47.20px;top:231.00px;font:normal 9.6px/1 'Liberation Sans';color:#000;letter-spacing:-0.044px;-webkit-text-stroke:0.1px #000">Черновики</div>
<div class="t" style="left:47.20px;top:246.00px;font:normal 9.6px/1 'Liberation Sans';color:#000;letter-spacing:-0.120px;-webkit-text-stroke:0.1px #000">Отправленные</div>
<div class="t" style="left:47.20px;top:261.00px;font:normal 9.6px/1 'Liberation Sans';color:#000;letter-spacing:-0.088px;-webkit-text-stroke:0.1px #000">Удалённые</div>
<div class="t" style="left:185.20px;top:98.00px;font:normal 9.6px/1 'Liberation Sans';color:#000;letter-spacing:-0.350px;-webkit-text-stroke:0.1px #000">Просмотр:</div>
<div class="a" style="left:185px;top:107px;width:6px;height:1px;background:#222"></div>
<div class="a" style="left:426px;top:107px;width:5px;height:1px;background:#222"></div>
<div class="a" style="left:757px;top:108px;width:5px;height:1px;background:#9a9a9a"></div>
<div class="t" style="left:250.00px;top:98.00px;font:normal 9.6px/1 'Liberation Sans';color:#000;letter-spacing:-0.350px;transform:scaleX(0.9680);transform-origin:0.00px 0;-webkit-text-stroke:0.1px #000">Все</div>
<div class="t" style="left:410.00px;top:98.00px;font:normal 9.6px/1 'Liberation Sans';color:#000;letter-spacing:-0.140px;-webkit-text-stroke:0.1px #000">Поля "Тема" или "Отправитель" содержат:</div>
<div class="t" style="left:744.00px;top:98.00px;font:normal 9.6px/1 'Liberation Sans';color:#8e8e8e;letter-spacing:-0.350px;transform:scaleX(0.9666);transform-origin:0.00px 0;-webkit-text-stroke:0.1px #8e8e8e">Очистить</div>
<div class="t" style="left:205.00px;top:121.00px;font:normal 9.6px/1 'Liberation Sans';color:#000;letter-spacing:-0.350px;transform:scaleX(0.8895);transform-origin:0.00px 0;-webkit-text-stroke:0.1px #000">Тема</div>
<div class="t" style="left:430.50px;top:121.00px;font:normal 9.6px/1 'Liberation Sans';color:#000;letter-spacing:-0.058px;-webkit-text-stroke:0.1px #000">Отправитель</div>
<div class="t" style="left:619.25px;top:121.00px;font:normal 9.6px/1 'Liberation Sans';color:#000;letter-spacing:0.031px;-webkit-text-stroke:0.1px #000">Дата</div>
<div class="t" style="left:707.50px;top:121.00px;font:normal 9.6px/1 'Liberation Sans';color:#000;letter-spacing:-0.175px;-webkit-text-stroke:0.1px #000">Важность</div>
<div class="t" style="left:217.50px;top:136.00px;font:normal 9.6px/1 'Liberation Sans';color:#000;letter-spacing:-0.112px;-webkit-text-stroke:0.1px #000">SourceForge.net Account Registration: Em...</div>
<div class="t" style="left:427.75px;top:136.00px;font:normal 9.6px/1 'Liberation Sans';color:#000;letter-spacing:-0.218px;-webkit-text-stroke:0.1px #000">SourceForge.net</div>
<div class="t" style="left:616.00px;top:136.00px;font:normal 9.6px/1 'Liberation Sans';color:#000;letter-spacing:0.082px;-webkit-text-stroke:0.1px #000">13:23</div>
<div class="t" style="left:217.50px;top:151.00px;font:normal 9.6px/1 'Liberation Sans';color:#fff;letter-spacing:-0.125px;-webkit-text-stroke:0.1px #fff">Fwd:</div>
<div class="t" style="left:427.75px;top:151.00px;font:normal 9.6px/1 'Liberation Sans';color:#fff;letter-spacing:-0.350px;transform:scaleX(0.9476);transform-origin:0.00px 0;-webkit-text-stroke:0.1px #fff">ksenia</div>
<div class="t" style="left:616.00px;top:151.00px;font:normal 9.6px/1 'Liberation Sans';color:#fff;letter-spacing:-0.010px;-webkit-text-stroke:0.1px #fff">04.04.2006 19:08</div>
<div class="t" style="left:704.70px;top:151.00px;font:normal 9.6px/1 'Liberation Sans';color:#fff;letter-spacing:-0.164px;-webkit-text-stroke:0.1px #fff">Обычная</div>
<div class="t" style="left:217.50px;top:167.00px;font:normal 9.6px/1 'Liberation Sans';color:#000;letter-spacing:-0.121px;-webkit-text-stroke:0.1px #000">Добро пожаловать  forum.swimming.ru</div>
<div class="t" style="left:427.75px;top:167.00px;font:normal 9.6px/1 'Liberation Sans';color:#000;letter-spacing:-0.178px;-webkit-text-stroke:0.1px #000">forum.swimming.ru</div>
<div class="t" style="left:616.00px;top:167.00px;font:normal 9.6px/1 'Liberation Sans';color:#000;letter-spacing:-0.010px;-webkit-text-stroke:0.1px #000">03.04.2006 17:55</div>
<div class="t" style="left:221.20px;top:301.00px;font:bold 9.6px/1 'Liberation Sans';color:#000;letter-spacing:0.276px;-webkit-text-stroke:0.1px #000">Тема:</div>
<div class="t" style="left:253.50px;top:301.00px;font:bold 9.6px/1 'Liberation Sans';color:#000;letter-spacing:-0.350px;transform:scaleX(0.9937);transform-origin:0.00px 0;-webkit-text-stroke:0.1px #000">Fwd:</div>
<div class="t" style="left:232.80px;top:317.00px;font:bold 9.6px/1 'Liberation Sans';color:#000;letter-spacing:0.120px;-webkit-text-stroke:0.1px #000">От:</div>
<div class="t" style="left:253.60px;top:317.00px;font:normal 9.6px/1 'Liberation Sans';color:#555;letter-spacing:-0.167px;-webkit-text-stroke:0.1px #555;text-decoration:underline;text-underline-offset:0.0px">ksenia &lt;ksenia@kpkuban.net&gt;</div>
<div class="t" style="left:181.20px;top:332.00px;font:bold 9.6px/1 'Liberation Sans';color:#000;letter-spacing:0.224px;-webkit-text-stroke:0.1px #000">Обратный адрес:</div>
<div class="t" style="left:272.00px;top:332.00px;font:normal 9.6px/1 'Liberation Sans';color:#555;letter-spacing:-0.159px;-webkit-text-stroke:0.1px #555;text-decoration:underline;text-underline-offset:0.0px">ksenia &lt;ksenia@kpkuban.net&gt;</div>
<div class="t" style="left:219.30px;top:347.00px;font:bold 9.6px/1 'Liberation Sans';color:#000;letter-spacing:0.949px;-webkit-text-stroke:0.1px #000">Дата:</div>
<div class="t" style="left:253.60px;top:347.00px;font:normal 9.6px/1 'Liberation Sans';color:#000;letter-spacing:-0.024px;-webkit-text-stroke:0.1px #000">04.04.2006 19:08</div>
<div class="t" style="left:220.50px;top:362.00px;font:bold 9.6px/1 'Liberation Sans';color:#000;letter-spacing:0.233px;-webkit-text-stroke:0.1px #000">Кому:</div>
<div class="t" style="left:253.60px;top:362.00px;font:normal 9.6px/1 'Liberation Sans';color:#555;letter-spacing:-0.344px;-webkit-text-stroke:0.1px #555;text-decoration:underline;text-underline-offset:0.0px">nikolay</div>
<div class="t" style="left:612.00px;top:302.00px;font:bold 9.6px/1 'Liberation Sans';color:#000;letter-spacing:0.196px;-webkit-text-stroke:0.1px #000">Вложения:</div>
<div class="t" style="left:633.00px;top:320.00px;font:normal 9.6px/1 'Liberation Sans';color:#000;letter-spacing:-0.220px;-webkit-text-stroke:0.1px #000">Сообщение.html</div>
<div class="t" style="left:633.00px;top:337.00px;font:normal 9.6px/1 'Liberation Sans';color:#000;letter-spacing:-0.274px;-webkit-text-stroke:0.1px #000">2005-12-01_MLG_8.pdf</div>
<div class="t" style="left:649.50px;top:657.00px;font:normal 8.2px/1 'Liberation Sans';color:#000;letter-spacing:-0.130px;-webkit-text-stroke:0.1px #000">Непрочитанных: 0</div>
<div class="t" style="left:725.40px;top:657.00px;font:normal 8.2px/1 'Liberation Sans';color:#000;letter-spacing:-0.202px;-webkit-text-stroke:0.1px #000">Всего: 3</div>
<div class="t" style="left:189.00px;top:387.00px;font:normal 11.42px/1 'Liberation Mono';color:#2a2a2a">Здравствуйте, .</div>
<div class="t" style="left:189.00px;top:441.00px;font:normal 11.42px/1 'Liberation Mono';color:#2a2a2a">---------- Пересылаемое письмо ----------</div>
<div class="t" style="left:189.00px;top:455.00px;font:normal 11.42px/1 'Liberation Mono';color:#2a2a2a">От:                  Люда </div>
<div class="t" style="left:367.15px;top:455.00px;font:normal 11.42px/1 'Liberation Mono';color:#555;text-decoration:underline;text-underline-offset:2.0px">&lt;luda@kpkuban.net&gt;</div>
<div class="t" style="left:189.00px;top:469.00px;font:normal 11.42px/1 'Liberation Mono';color:#2a2a2a">К:</div>
<div class="t" style="left:332.89px;top:469.00px;font:normal 11.42px/1 'Liberation Mono';color:#555;text-decoration:underline;text-underline-offset:2.0px">&lt;ksenia@kpkuban.net&gt;</div>
<div class="t" style="left:189.00px;top:482.00px;font:normal 11.42px/1 'Liberation Mono';color:#2a2a2a">А также к:</div>
<div class="t" style="left:189.00px;top:496.00px;font:normal 11.42px/1 'Liberation Mono';color:#2a2a2a">Время создания:      Tue, 4 Apr 2006 18:24:14 +0400</div>
<div class="t" style="left:189.00px;top:509.00px;font:normal 11.42px/1 'Liberation Mono';color:#2a2a2a">Тема:</div>
<div class="t" style="left:189.00px;top:523.00px;font:normal 11.42px/1 'Liberation Mono';color:#2a2a2a">Прикрепленные файлы: Сообщение.html, 2005-12-01_MLG_8.pdf</div>
<div class="t" style="left:189.00px;top:605.00px;font:normal 11.42px/1 'Liberation Mono';color:#2a2a2a">С уважением,менеджер отдела рекламы "КП - Кубань", Пурихова Людмила.</div>
<div class="t" style="left:189.00px;top:632.00px;font:normal 11.42px/1 'Liberation Mono';color:#2a2a2a">(861) 253-73-82</div>
</body></html>
